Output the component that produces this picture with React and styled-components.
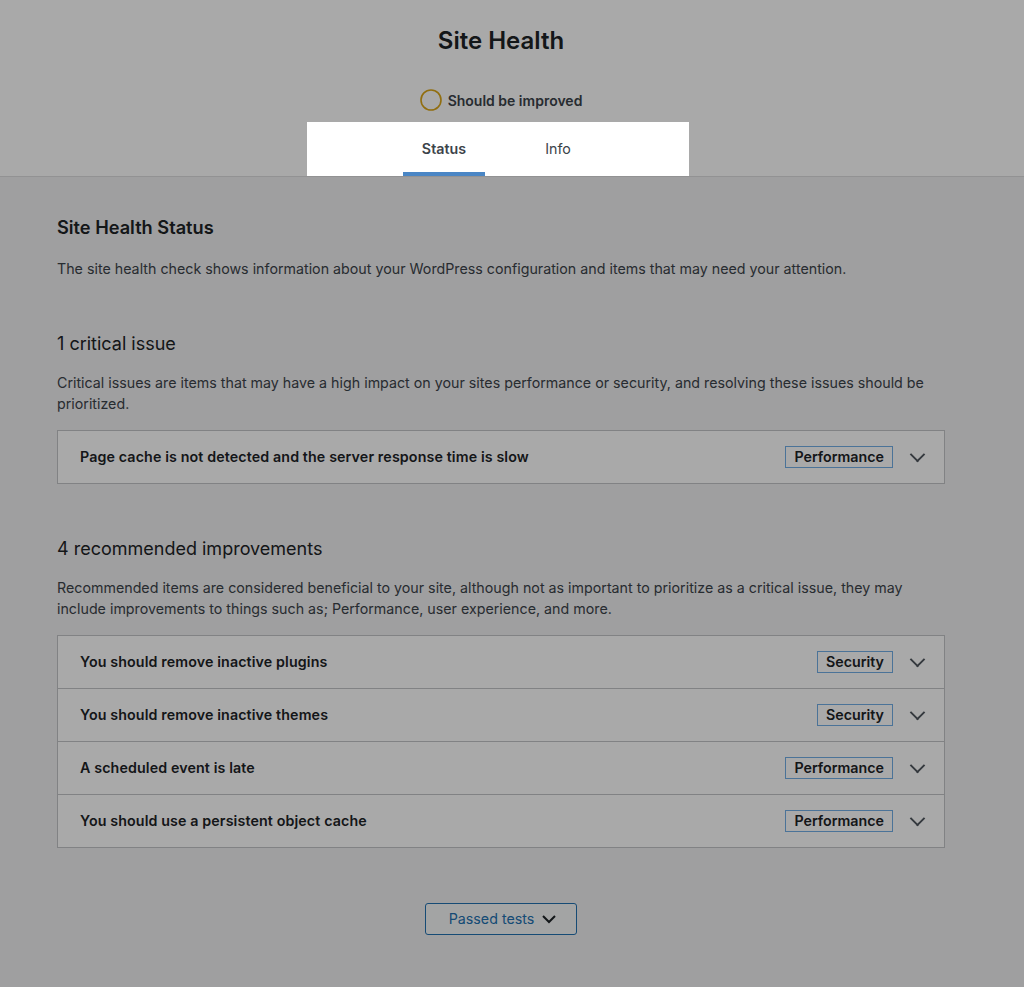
import React from 'react';
import styled, { createGlobalStyle } from 'styled-components';

const GlobalStyle = createGlobalStyle`
  html, body {
    margin: 0;
    padding: 0;
  }
  body {
    background: #f0f0f1;
    color: #3c434a;
    font-family: Inter, "Noto Sans", sans-serif;
    font-size: 14.25px;
    min-height: 100vh;
    overflow: hidden;
  }
`;

const Header = styled.header`
  background: #fff;
  border-bottom: 1px solid #dcdcde;
  text-align: center;
  padding: 25px 22px 0 0;
`;

const Title = styled.h1`
  margin: 0;
  font-size: 24px;
  line-height: 32px;
  font-weight: 600;
  color: #1d2327;
`;

const Progress = styled.div`
  display: flex;
  justify-content: center;
  align-items: center;
  gap: 6px;
  margin-top: 32px;
  height: 22px;
  font-size: 14px;
  font-weight: 600;
  color: #3c434a;
`;

const TabsWrapper = styled.nav`
  position: relative;
  display: inline-grid;
  grid-template-columns: 1fr 1fr;
  margin-top: 20px;
`;

// Tour spotlight: a clear window, everything around it dimmed.
const Spotlight = styled.div`
  position: absolute;
  top: -9px;
  left: -80px;
  width: 382px;
  bottom: 0;
  box-shadow: 0 0 0 9999px rgba(0, 0, 0, 0.337);
  pointer-events: none;
  z-index: 10;
`;

const Tab = styled.a`
  display: block;
  margin: 0 16px;
  padding: 8px 19px 17px;
  line-height: 20px;
  color: #3c434a;
  text-decoration: none;
  font-weight: ${(p) => (p.$active ? 600 : 400)};
  box-shadow: ${(p) => (p.$active ? 'inset 0 -4px #4a86c5' : 'none')};
`;

const Body = styled.main`
  padding: 38px 79px 0 57px;
`;

const H2 = styled.h2`
  margin: 0;
  font-size: 18.2px;
  line-height: 24px;
  font-weight: 600;
  color: #1d2327;
`;

const H3 = styled.h3`
  margin: ${(p) => p.$top}px 0 0;
  font-size: 18px;
  line-height: 24px;
  font-weight: 400;
  color: #1d2327;
`;

const Text = styled.p`
  margin: ${(p) => p.$top}px 0 0;
  line-height: 21.5px;
`;

const Accordion = styled.div`
  margin-top: 15px;
  border: 1px solid #c3c4c7;
  background: #fff;
`;

const Item = styled.div`
  position: relative;
  display: flex;
  align-items: center;
  justify-content: space-between;
  height: 52px;
  padding: 0 51px 0 22px;
  font-weight: 600;
  letter-spacing: 0.12px;
  color: #1d2327;
  & + & {
    border-top: 1px solid #c3c4c7;
  }
`;

const Badge = styled.span`
  display: inline-flex;
  align-items: center;
  height: 20px;
  padding: 0 8px;
  border: 1px solid #72aee6;
  font-weight: 600;
  letter-spacing: 0;
  color: #1d2327;
`;

const Chevron = styled.span`
  position: absolute;
  right: 21px;
  top: 50%;
  width: 9px;
  height: 9px;
  border: solid #50575e;
  border-width: 0 2px 2px 0;
  transform: translateY(-72%) rotate(45deg);
`;

const Footer = styled.div`
  display: flex;
  justify-content: center;
  margin-top: 55px;
`;

const Button = styled.button`
  display: inline-flex;
  align-items: center;
  gap: 5px;
  height: 32px;
  padding: 0 17px 0 23px;
  border: 1px solid #2271b1;
  border-radius: 3px;
  background: #f6f7f7;
  color: #2271b1;
  font-family: inherit;
  font-size: 14.25px;
`;

const critical = [
  { label: 'Page cache is not detected and the server response time is slow', badge: 'Performance' },
];

const recommended = [
  { label: 'You should remove inactive plugins', badge: 'Security' },
  { label: 'You should remove inactive themes', badge: 'Security' },
  { label: 'A scheduled event is late', badge: 'Performance' },
  { label: 'You should use a persistent object cache', badge: 'Performance' },
];

const Issues = ({ items }) => (
  <Accordion>
    {items.map((it) => (
      <Item key={it.label}>
        <span>{it.label}</span>
        <Badge>{it.badge}</Badge>
        <Chevron />
      </Item>
    ))}
  </Accordion>
);

const App = () => (
  <>
    <GlobalStyle />
    <Header>
      <Title>Site Health</Title>
      <Progress>
        <svg width="22" height="22" viewBox="0 0 22 22">
          <circle cx="11" cy="11" r="10" fill="none" stroke="#dba617" strokeWidth="1.6" />
        </svg>
        Should be improved
      </Progress>
      <TabsWrapper>
        <Spotlight />
        <Tab $active>Status</Tab>
        <Tab>Info</Tab>
      </TabsWrapper>
    </Header>
    <Body>
      <H2>Site Health Status</H2>
      <Text $top={19}>
        The site health check shows information about your WordPress configuration and items that may need your attention.
      </Text>
      <H3 $top={52}>1 critical issue</H3>
      <Text $top={16}>
        Critical issues are items that may have a high impact on your sites performance or security, and resolving these issues should be prioritized.
      </Text>
      <Issues items={critical} />
      <H3 $top={53}>4 recommended improvements</H3>
      <Text $top={16}>
        Recommended items are considered beneficial to your site, although not as important to prioritize as a critical issue, they may include improvements to things such as; Performance, user experience, and more.
      </Text>
      <Issues items={recommended} />
      <Footer>
        <Button>
          Passed tests
          <svg width="20" height="20" viewBox="0 0 20 20">
            <path d="M4 7l6 6 6-6" fill="none" stroke="#1d2327" strokeWidth="2" />
          </svg>
        </Button>
      </Footer>
    </Body>
  </>
);

export default App;
